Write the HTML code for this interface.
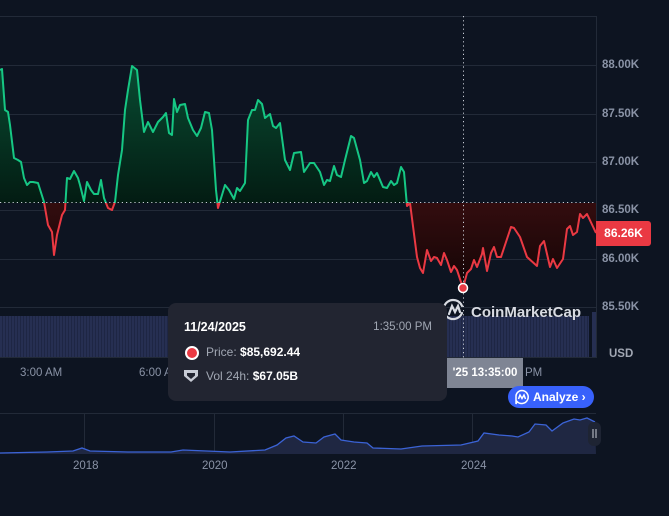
<!DOCTYPE html>
<html><head><meta charset="utf-8"><style>
html,body{margin:0;padding:0;background:#0d1421;width:669px;height:516px;overflow:hidden;font-family:"Liberation Sans",sans-serif}
.ax{position:absolute;left:602px;font-size:11.5px;font-weight:bold;color:#8a93a6}
.tl{position:absolute;font-size:11.5px;color:#8a93a6}
</style></head><body>
<svg width="669" height="516" style="position:absolute;left:0;top:0">
<defs>
<linearGradient id="gg" x1="0" y1="65" x2="0" y2="203" gradientUnits="userSpaceOnUse"><stop offset="0" stop-color="#16c784" stop-opacity="0.38"/><stop offset="1" stop-color="#16c784" stop-opacity="0.14"/></linearGradient>
<linearGradient id="rg" x1="0" y1="203" x2="0" y2="290" gradientUnits="userSpaceOnUse"><stop offset="0" stop-color="#ea3943" stop-opacity="0.22"/><stop offset="1" stop-color="#ea3943" stop-opacity="0.08"/></linearGradient>
<clipPath id="top"><rect x="0" y="0" width="596" height="203"/></clipPath>
<clipPath id="bot"><rect x="0" y="203" width="596" height="200"/></clipPath>
<pattern id="vb" width="3" height="60" patternUnits="userSpaceOnUse"><rect width="2.4" height="60" fill="#262f52"/><rect x="2.4" width="0.6" height="60" fill="#1c2340"/></pattern>
</defs>
<g stroke="#222a38" stroke-width="1">
<line x1="0" y1="16.5" x2="596" y2="16.5"/>
<line x1="0" y1="65.5" x2="596" y2="65.5"/><line x1="0" y1="114.5" x2="596" y2="114.5"/><line x1="0" y1="162.5" x2="596" y2="162.5"/><line x1="0" y1="210.5" x2="596" y2="210.5"/><line x1="0" y1="259.5" x2="596" y2="259.5"/><line x1="0" y1="307.5" x2="596" y2="307.5"/>
<line x1="596.5" y1="16" x2="596.5" y2="358"/>
<line x1="0" y1="357.5" x2="596" y2="357.5"/>
</g>
<rect x="0" y="316" width="589" height="41" fill="url(#vb)"/>
<rect x="592" y="312" width="4" height="45" fill="#262f52"/>
<g id="pl">
<path id="area" d="M0,203 L0,70 2,69 5,110 8,112 10,125 14,158 18,160 21,162 24,178 27,185 30,182 33,182 38,183 44,202 48,225 52,232 54,255 57,235 62,215 65,210 67,178 70,179 74,171 78,178 80,185 84,201 87,182 91,190 94,194 98,194 101,180 104,198 108,208 112,210 115,202 118,175 122,150 125,110 128,90 132,66 137,70 140,100 144,132 148,122 153,132 158,122 163,117 166,113 169,133 172,135 174,99 177,112 180,105 185,104 188,118 193,130 197,136 201,128 205,112 209,113 212,130 216,190 218,208 222,195 225,185 229,190 234,199 237,188 240,191 245,183 248,120 252,110 255,110 258,100 262,104 265,118 270,114 273,126 276,128 280,123 285,160 290,170 294,153 301,152 304,172 310,163 314,163 320,172 324,185 327,180 330,181 334,166 337,175 341,177 345,160 351,136 354,138 360,160 364,183 367,181 371,172 374,177 377,173 383,187 387,188 391,181 394,185 397,183 401,167 404,172 407,206 410,203 417,257 420,268 423,273 427,250 431,261 434,257 437,258 441,265 444,253 447,260 451,272 454,266 457,270 463,288 467,273 471,269 474,260 477,267 482,254 483,248 487,271 491,253 494,247 497,257 501,257 511,227 514,228 520,237 527,257 537,266 540,246 544,241 550,267 553,259 557,268 563,259 567,229 570,226 573,235 577,232 580,214 583,218 587,214 596,233 L596,203 Z"/>
</g>
<use href="#area" fill="url(#gg)" clip-path="url(#top)"/>
<use href="#area" fill="url(#rg)" clip-path="url(#bot)"/>
<path id="ln" fill="none" stroke-width="2" stroke-linejoin="round" d="M0,70 2,69 5,110 8,112 10,125 14,158 18,160 21,162 24,178 27,185 30,182 33,182 38,183 44,202 48,225 52,232 54,255 57,235 62,215 65,210 67,178 70,179 74,171 78,178 80,185 84,201 87,182 91,190 94,194 98,194 101,180 104,198 108,208 112,210 115,202 118,175 122,150 125,110 128,90 132,66 137,70 140,100 144,132 148,122 153,132 158,122 163,117 166,113 169,133 172,135 174,99 177,112 180,105 185,104 188,118 193,130 197,136 201,128 205,112 209,113 212,130 216,190 218,208 222,195 225,185 229,190 234,199 237,188 240,191 245,183 248,120 252,110 255,110 258,100 262,104 265,118 270,114 273,126 276,128 280,123 285,160 290,170 294,153 301,152 304,172 310,163 314,163 320,172 324,185 327,180 330,181 334,166 337,175 341,177 345,160 351,136 354,138 360,160 364,183 367,181 371,172 374,177 377,173 383,187 387,188 391,181 394,185 397,183 401,167 404,172 407,206 410,203 417,257 420,268 423,273 427,250 431,261 434,257 437,258 441,265 444,253 447,260 451,272 454,266 457,270 463,288 467,273 471,269 474,260 477,267 482,254 483,248 487,271 491,253 494,247 497,257 501,257 511,227 514,228 520,237 527,257 537,266 540,246 544,241 550,267 553,259 557,268 563,259 567,229 570,226 573,235 577,232 580,214 583,218 587,214 596,233"/>
<use href="#ln" stroke="#16c784" clip-path="url(#top)"/>
<use href="#ln" stroke="#ea3943" clip-path="url(#bot)"/>
<line x1="0" y1="202.5" x2="596" y2="202.5" stroke="#c8ccd6" stroke-width="1" stroke-dasharray="1.2 3"/>
<line x1="463.5" y1="16" x2="463.5" y2="358" stroke="#c8ccd6" stroke-width="1" stroke-dasharray="1.2 3"/>
<circle cx="463" cy="288" r="4.5" fill="#ea3943" stroke="#fff" stroke-width="1.5"/>
<g transform="translate(444,300)" fill="none" stroke="#d8dbe2" stroke-width="2.2" stroke-linecap="round">
<path d="M18,13 A9.5,9.5 0 1 1 18,6"/>
<path d="M5,14 L8,6 L11,12 L14,6 L16,12"/>
</g>
<text x="471" y="317" font-family="Liberation Sans" font-size="15" font-weight="bold" fill="#d8dbe2">CoinMarketCap</text>
<g stroke="#222a38" stroke-width="1">
<line x1="0" y1="413.5" x2="596" y2="413.5"/>
<line x1="84.5" y1="413" x2="84.5" y2="454"/><line x1="214.5" y1="413" x2="214.5" y2="454"/><line x1="343.5" y1="413" x2="343.5" y2="454"/><line x1="472.5" y1="413" x2="472.5" y2="454"/>
</g>
<path d="M0,454 L0,453 47,452 73,451 82,448 90,451 128,452 171,452 183,450 230,452 265,450 277,445 286,438 294,436 303,442 316,443 324,437 335,434 341,440 354,442 367,443 373,448 401,449 422,446 461,445 478,441 484,433 499,435 512,436 518,437 529,432 535,424 546,425 552,431 563,423 574,419 580,420 587,418 595,422 596,454 Z" fill="#1f2742"/>
<path d="M0,453 47,452 73,451 82,448 90,451 128,452 171,452 183,450 230,452 265,450 277,445 286,438 294,436 303,442 316,443 324,437 335,434 341,440 354,442 367,443 373,448 401,449 422,446 461,445 478,441 484,433 499,435 512,436 518,437 529,432 535,424 546,425 552,431 563,423 574,419 580,420 587,418 595,422" fill="none" stroke="#3b63d6" stroke-width="1.3"/>
<rect x="588" y="422" width="13" height="24" rx="6" fill="#1e2433"/>
<line x1="593" y1="429" x2="593" y2="438" stroke="#c8ccd6"/><line x1="596" y1="429" x2="596" y2="438" stroke="#c8ccd6"/>
</svg>
<div class="ax" style="top:59px">88.00K</div>
<div class="ax" style="top:108px">87.50K</div>
<div class="ax" style="top:156px">87.00K</div>
<div class="ax" style="top:204px">86.50K</div>
<div class="ax" style="top:253px">86.00K</div>
<div class="ax" style="top:301px">85.50K</div>
<div class="ax" style="top:348px;left:609px;color:#a1a7b3">USD</div>
<div style="position:absolute;left:596px;top:221px;width:55px;height:25px;background:#ea3943;border-radius:0 3px 3px 0;color:#fff;font-size:12px;font-weight:bold;line-height:25px;text-align:center">86.26K</div>
<div class="tl" style="left:20px;top:367px">3:00 AM</div>
<div class="tl" style="left:139px;top:367px">6:00 AM</div>
<div class="tl" style="left:525px;top:367px">PM</div>
<div style="position:absolute;left:447px;top:358px;width:76px;height:30px;background:#7f8594;color:#fff;font-size:11.5px;font-weight:bold;line-height:30px;text-align:center">'25 13:35:00</div>
<div style="position:absolute;left:508px;top:386px;width:86px;height:22px;background:#3861fb;border-radius:11px;color:#fff;font-size:12px;font-weight:bold;line-height:22px">
<svg width="16" height="16" style="position:absolute;left:6px;top:3px" fill="none" stroke="#fff" stroke-width="1.5"><path d="M8,1.5 A6.5,6.5 0 1 1 3,12.5 L2,15 L2,8 A6,6 0 0 1 8,1.5Z"/><path d="M4.5,10 L6,6 L8,9.5 L10,6 L11.5,10"/></svg>
<span style="position:absolute;left:25px">Analyze ›</span></div>
<div style="position:absolute;left:168px;top:303px;width:279px;height:98px;background:#222531;border-radius:8px;color:#fff">
<div style="position:absolute;left:16px;top:17px;font-size:12.5px;font-weight:bold">11/24/2025</div>
<div style="position:absolute;right:15px;top:18px;font-size:11.5px;color:#a1a7b3">1:35:00 PM</div>
<div style="position:absolute;left:17px;top:43px;width:10px;height:10px;border-radius:50%;background:#ea3943;border:2px solid #fff"></div>
<div style="position:absolute;left:38px;top:42px;font-size:12px;color:#a1a7b3">Price: <b style="color:#fff">$85,692.44</b></div>
<svg width="16" height="14" style="position:absolute;left:15px;top:66px"><path d="M1,1 H15 V7 L8,13 L1,7Z" fill="#c8ccd6"/><path d="M4,4 H12 V6.5 L8,10 L4,6.5Z" fill="#222531"/></svg>
<div style="position:absolute;left:38px;top:66px;font-size:12px;color:#a1a7b3">Vol 24h: <b style="color:#fff">$67.05B</b></div>
</div>
<div class="tl" style="left:73px;top:460px">2018</div>
<div class="tl" style="left:202px;top:460px">2020</div>
<div class="tl" style="left:331px;top:460px">2022</div>
<div class="tl" style="left:461px;top:460px">2024</div>
</body></html>
